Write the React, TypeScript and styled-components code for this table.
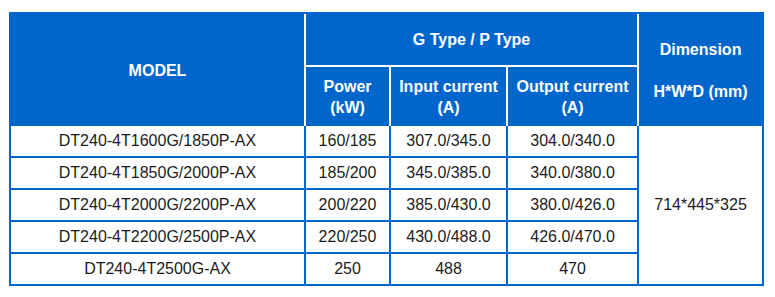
import * as React from "react";
import styled, { createGlobalStyle } from "styled-components";

// 表のデータ
interface Row {
  model: string;
  power: string;
  input: string;
  output: string;
}

const rows: Row[] = [
  { model: "DT240-4T1600G/1850P-AX", power: "160/185", input: "307.0/345.0", output: "304.0/340.0" },
  { model: "DT240-4T1850G/2000P-AX", power: "185/200", input: "345.0/385.0", output: "340.0/380.0" },
  { model: "DT240-4T2000G/2200P-AX", power: "200/220", input: "385.0/430.0", output: "380.0/426.0" },
  { model: "DT240-4T2200G/2500P-AX", power: "220/250", input: "430.0/488.0", output: "426.0/470.0" },
  { model: "DT240-4T2500G-AX", power: "250", input: "488", output: "470" },
];

const BLUE = "#0066cc";

const GlobalStyle = createGlobalStyle`
  body {
    margin: 0;
    background: #fff;
    font-family: "Liberation Sans", Arial, sans-serif;
  }
`;

export default function App() {
  return (
    <>
      <GlobalStyle />
      <Page>
        <SpecTable>
          <colgroup>
            <col style={{ width: 295 }} />
            <col style={{ width: 85 }} />
            <col style={{ width: 117 }} />
            <col style={{ width: 131 }} />
            <col style={{ width: 123 }} />
          </colgroup>
          <thead>
            <HeadRow $height={53}>
              <Th rowSpan={2} $right $bottomBlue>
                MODEL
              </Th>
              <Th colSpan={3} $right $bottomWhite>
                G Type / P Type
              </Th>
              <Th rowSpan={2} $bottomBlue>
                Dimension
                <br />
                <br />
                H*W*D (mm)
              </Th>
            </HeadRow>
            <HeadRow $height={59}>
              <Th $right>
                Power
                <br />
                (kW)
              </Th>
              <Th $right>
                Input current
                <br />
                (A)
              </Th>
              <Th $right>
                Output current
                <br />
                (A)
              </Th>
            </HeadRow>
          </thead>
          <tbody>
            {rows.map((row, i) => {
              const last = i === rows.length - 1;
              return (
                <BodyRow key={row.model} $height={last ? 30 : 32}>
                  <Td $last={last}>{row.model}</Td>
                  <Td $last={last}>{row.power}</Td>
                  <Td $last={last}>{row.input}</Td>
                  <Td $last={last}>{row.output}</Td>
                  {i === 0 && (
                    <Td rowSpan={rows.length} $last $noRight>
                      714*445*325
                    </Td>
                  )}
                </BodyRow>
              );
            })}
          </tbody>
        </SpecTable>
      </Page>
    </>
  );
}

const Page = styled.div`
  padding: 12px 0 0 9px;
`;

const SpecTable = styled.table`
  width: 755px;
  table-layout: fixed;
  border-collapse: separate;
  border-spacing: 0;
  border: 2px solid ${BLUE};
`;

const HeadRow = styled.tr<{ $height: number }>`
  height: ${(p) => p.$height}px;
`;

const BodyRow = styled.tr<{ $height: number }>`
  height: ${(p) => p.$height}px;
`;

const Th = styled.th<{ $right?: boolean; $bottomWhite?: boolean; $bottomBlue?: boolean }>`
  padding: 0;
  background: ${BLUE};
  color: #fff;
  font-size: 16px;
  font-weight: bold;
  line-height: 21px;
  text-align: center;
  vertical-align: middle;
  border-right: 2px solid ${(p) => (p.$right ? "#fff" : BLUE)};
  border-bottom: 2px solid ${(p) => (p.$bottomWhite ? "#fff" : BLUE)};
  border-right-width: ${(p) => (p.$right ? "2px" : "0")};
  border-bottom-width: ${(p) => (p.$bottomWhite ? "2px" : "0")};
`;

const Td = styled.td<{ $last?: boolean; $noRight?: boolean }>`
  padding: 0;
  color: #1c1c1c;
  font-size: 16px;
  line-height: 20px;
  text-align: center;
  vertical-align: middle;
  border-right: ${(p) => (p.$noRight ? "0" : `2px solid ${BLUE}`)};
  border-bottom: ${(p) => (p.$last ? "0" : `2px solid ${BLUE}`)};
`;
